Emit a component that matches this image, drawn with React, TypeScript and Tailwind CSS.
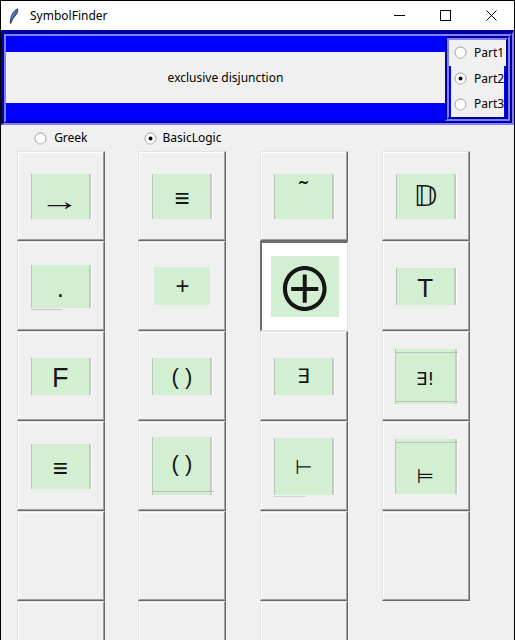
import React from 'react';

type Cell = {
  label: string;
  rect: string;
  glyph: string;
  sunken?: boolean;
  deco?: React.ReactNode;
};

const sides = 'border-l border-r-2 border-l-[#b8c6b8] border-r-[#c2ccc2] shadow-[1px_0_0_#ffffff]';

const cells: Cell[] = [
  { label: '→', rect: `w-[60px] h-[45px] ${sides}`, glyph: "font-['Liberation_Sans'] text-[26px] translate-y-[5px] scale-x-[1.55]" },
  { label: '≡', rect: `w-[60px] h-[45px] ${sides}`, glyph: "font-['Liberation_Sans'] text-[26px] translate-y-[2px]" },
  { label: '˜', rect: `w-[60px] h-[45px] ${sides}`, glyph: "font-['Liberation_Sans'] text-[26px] -translate-y-[6px]" },
  { label: '𝔻', rect: `w-[60px] h-[45px] ${sides}`, glyph: "font-['DejaVu_Sans'] text-[29px]" },
  {
    label: '.',
    rect: `w-[60px] h-[43px] ${sides}`,
    glyph: "font-['Liberation_Sans'] text-[26px] translate-y-[2px]",
    deco: <span className="absolute left-[-1px] bottom-[-2px] w-[31px] h-[1px] bg-[#c4c8c4]" />,
  },
  { label: '+', rect: 'w-[56px] h-[38px]', glyph: "font-['Liberation_Sans'] text-[24px]" },
  { label: '⊕', rect: 'w-[68px] h-[61px]', glyph: "font-['Noto_Sans_CJK_SC','DejaVu_Sans'] text-[59px] font-normal -translate-y-[1px]", sunken: true },
  { label: 'T', rect: `w-[60px] h-[37px] ${sides}`, glyph: "font-['Liberation_Sans'] text-[26px] translate-y-[2px]" },
  { label: 'F', rect: `w-[60px] h-[37px] ${sides}`, glyph: "font-['Liberation_Sans'] text-[27px] translate-y-[2px]" },
  { label: '( )', rect: `w-[60px] h-[37px] ${sides}`, glyph: "font-['Liberation_Sans'] text-[22px] translate-y-[1px]" },
  { label: '∃', rect: `w-[60px] h-[37px] ${sides}`, glyph: "font-['DejaVu_Sans'] text-[20px]" },
  {
    label: '∃!',
    rect: `w-[62px] h-[55px] ${sides}`,
    glyph: "font-['DejaVu_Sans'] text-[18px] translate-y-[3px]",
    deco: (
      <>
        <span className="absolute left-0 right-[-3px] top-[3px] h-[1px] bg-[#b9c3b9]" />
        <span className="absolute left-0 right-[-3px] bottom-[2px] h-[1px] bg-[#b9c3b9]" />
      </>
    ),
  },
  { label: '≡', rect: `w-[60px] h-[45px] ${sides}`, glyph: "font-['Liberation_Sans'] text-[26px] translate-y-[2px]" },
  {
    label: '( )',
    rect: `w-[60px] h-[58px] ${sides}`,
    glyph: "font-['Liberation_Sans'] text-[22px] -translate-y-[2px]",
    deco: <span className="absolute left-[-1px] right-[-4px] bottom-[3px] h-[1px] bg-[#b4bcb4]" />,
  },
  {
    label: '⊢',
    rect: `w-[60px] h-[57px] ${sides}`,
    glyph: "font-['DejaVu_Sans'] text-[20px] translate-y-[1px]",
    deco: <span className="absolute left-[-1px] bottom-[-2px] w-[32px] h-[1px] bg-[#cfd2cf]" />,
  },
  {
    label: '⊨',
    rect: `w-[62px] h-[55px] ${sides}`,
    glyph: "font-['DejaVu_Sans'] text-[20px] translate-y-[10px]",
    deco: <span className="absolute left-0 right-[-3px] top-[3px] h-[1px] bg-[#b9c3b9]" />,
  },
];

function Radio({ checked }: { checked?: boolean }) {
  return (
    <svg width="13" height="13" viewBox="0 0 13 13" className="shrink-0">
      <circle cx="6.5" cy="6.5" r="5.5" fill="#ffffff" stroke="#9a9a9a" strokeWidth="1" />
      <path d="M2.6 10.4 A5.5 5.5 0 0 0 10.4 10.4" fill="none" stroke="#dcdcdc" strokeWidth="1" />
      {checked && <circle cx="6.5" cy="6.5" r="2" fill="#000000" />}
    </svg>
  );
}

function SymbolButton({ cell }: { cell?: Cell }) {
  const raised =
    'border-t border-l border-r border-b border-t-[#e3e3e3] border-l-[#e3e3e3] border-r-[#696969] border-b-[#696969] shadow-[inset_-1px_-1px_0_#a0a0a0,inset_1px_1px_0_#ffffff] bg-[#f0f0f0]';
  const sunken =
    'border-t-2 border-l-2 border-r border-b border-t-[#6d6d6d] border-l-[#6d6d6d] border-r-[#e3e3e3] border-b-[#e3e3e3] bg-white';
  return (
    <div className={`w-[88px] h-[90px] flex items-center justify-center ${cell?.sunken ? sunken : raised}`}>
      {cell && (
        <div className={`relative overflow-visible bg-[#d2efd2] flex items-center justify-center ${cell.rect}`}>
          <span className={`leading-none text-[#161616] ${cell.glyph}`}>{cell.label}</span>
          {cell.deco}
        </div>
      )}
    </div>
  );
}

export default function App() {
  const all: (Cell | undefined)[] = [...cells, ...Array(7).fill(undefined)];

  return (
    <div className="w-[515px] h-[640px] overflow-hidden bg-[#f0f0f0] border-l border-t border-r border-black font-['Noto_Sans',sans-serif] text-[12px] text-black">
      {/* title bar */}
      <div className="h-[29px] bg-white flex items-center">
        <svg width="10" height="16" viewBox="0 0 10 16" className="ml-[8px]">
          <path d="M8.6 0.8 C4.8 2.4 2.4 6.6 1.6 11.6 L1.2 15.2 L2.2 15 C2.6 12.6 3.6 10.8 5 9.2 C7.6 6.6 9.4 3.6 8.6 0.8 Z" fill="#5d8fd6" stroke="#1b2f55" strokeWidth="0.9" />
          <path d="M7.6 2.4 L2.4 13" stroke="#1b2f55" strokeWidth="0.6" />
        </svg>
        <span className="ml-[11px] text-[12px]">SymbolFinder</span>
        <div className="ml-auto flex h-full">
          <div className="w-[46px] flex items-center justify-center">
            <svg width="11" height="11" viewBox="0 0 11 11">
              <path d="M0 5.5 H11" stroke="#000" strokeWidth="1" />
            </svg>
          </div>
          <div className="w-[46px] flex items-center justify-center">
            <svg width="11" height="11" viewBox="0 0 11 11">
              <rect x="0.5" y="0.5" width="10" height="10" fill="none" stroke="#000" strokeWidth="1" />
            </svg>
          </div>
          <div className="w-[46px] flex items-center justify-center">
            <svg width="11" height="11" viewBox="0 0 11 11">
              <path d="M0.5 0.5 L10.5 10.5 M10.5 0.5 L0.5 10.5" stroke="#000" strokeWidth="1" />
            </svg>
          </div>
        </div>
      </div>

      {/* header frame */}
      <div className="h-[95px] border-t-4 border-l-[3px] border-r-2 border-b-2 border-t-[#0000a0] border-l-[#0000a0] border-r-[#7f7fff] border-b-[#7f7fff]">
        <div className="h-full flex border-2 border-t-[#7f7fff] border-l-[#7f7fff] border-r-[#0000a0] border-b-[#0000a0] bg-[#0000ff]">
          <div className="flex-1 pt-[16px]">
            <div className="h-[51px] bg-[#f0f0f0] flex items-center justify-center">exclusive disjunction</div>
          </div>
          <div className="w-[65px] border-2 border-t-[#0000a0] border-l-[#0000a0] border-r-[#7f7fff] border-b-[#7f7fff]">
            <div className="h-full flex flex-col border-2 border-t-[#7f7fff] border-l-[#7f7fff] border-r-[#0000a0] border-b-[#0000a0] bg-[#0000ff]">
              {['Part1', 'Part2', 'Part3'].map((p, i) => (
                <div
                  key={p}
                  className={`flex-1 flex items-center gap-[7px] bg-[#f0f0f0] ${i === 0 ? 'pl-[5px]' : 'mx-[2px] pl-[3px]'}`}
                >
                  <Radio checked={i === 1} />
                  <span>{p}</span>
                </div>
              ))}
            </div>
          </div>
        </div>
      </div>

      {/* category radios and symbol grid */}
      <div className="-ml-px grid grid-cols-[repeat(4,121.67px)] justify-items-center">
        <div className="h-[26px] flex items-center gap-[7px]">
          <Radio />
          <span>Greek</span>
        </div>
        <div className="h-[26px] flex items-center gap-[6px]">
          <Radio checked />
          <span>BasicLogic</span>
        </div>
        <div />
        <div />
        {all.map((c, i) => (
          <SymbolButton key={i} cell={c} />
        ))}
      </div>
    </div>
  );
}
